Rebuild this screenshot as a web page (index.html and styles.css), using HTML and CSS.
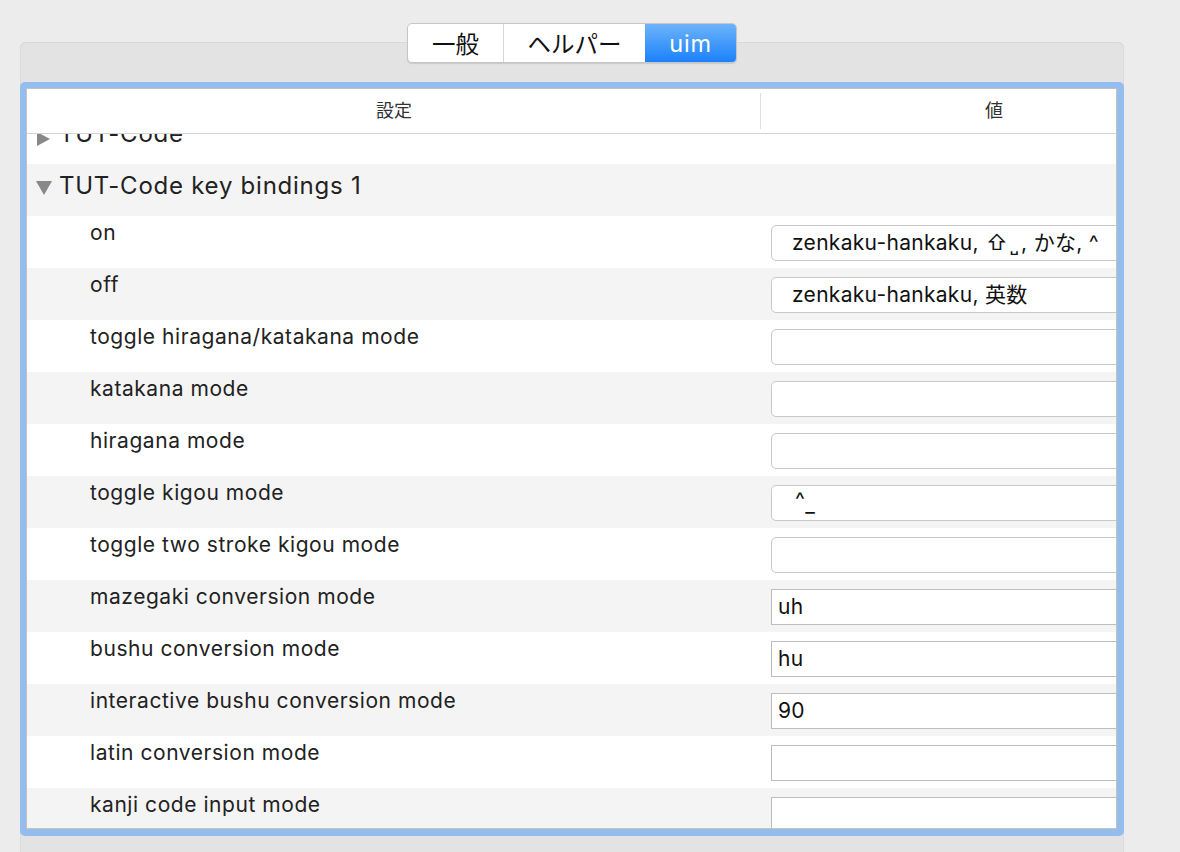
FILE: index.html
```html
<!DOCTYPE html>
<html lang="ja">
<head>
<meta charset="utf-8">
<link rel="stylesheet" href="styles.css">
</head>
<body>
<div class="page">
  <div class="tabs">
    <div class="seg seg-general">一般</div>
    <div class="seg seg-helper">ヘルパー</div>
    <div class="seg seg-uim active">uim</div>
  </div>
  <div class="group">
    <div class="frame">
      <div class="table">
        <div class="thead">
          <div class="th th-name">設定</div>
          <div class="th th-value">値</div>
        </div>
        <div class="tbody">
          <div class="rows">
            <div class="row cat"><span class="tri tri-right"></span><span class="cat-label">TUT-Code</span></div>
            <div class="row cat alt"><span class="tri tri-down"></span><span class="cat-label">TUT-Code key bindings 1</span></div>
            <div class="row"><div class="label">on</div><div class="val"><div class="field round">zenkaku-hankaku, <span class="shift">⇧˽</span>, かな, ^</div></div></div>
            <div class="row alt"><div class="label">off</div><div class="val"><div class="field round">zenkaku-hankaku, 英数</div></div></div>
            <div class="row"><div class="label">toggle hiragana/katakana mode</div><div class="val"><div class="field round"></div></div></div>
            <div class="row alt"><div class="label">katakana mode</div><div class="val"><div class="field round"></div></div></div>
            <div class="row"><div class="label">hiragana mode</div><div class="val"><div class="field round"></div></div></div>
            <div class="row alt"><div class="label">toggle kigou mode</div><div class="val"><div class="field round"><span class="caret">^</span><span class="under">_</span></div></div></div>
            <div class="row"><div class="label">toggle two stroke kigou mode</div><div class="val"><div class="field round"></div></div></div>
            <div class="row alt"><div class="label">mazegaki conversion mode</div><div class="val"><div class="field square">uh</div></div></div>
            <div class="row"><div class="label">bushu conversion mode</div><div class="val"><div class="field square">hu</div></div></div>
            <div class="row alt"><div class="label">interactive bushu conversion mode</div><div class="val"><div class="field square">90</div></div></div>
            <div class="row"><div class="label">latin conversion mode</div><div class="val"><div class="field square"></div></div></div>
            <div class="row alt"><div class="label">kanji code input mode</div><div class="val"><div class="field square"></div></div></div>
          </div>
        </div>
      </div>
    </div>
  </div>
</div>
</body>
</html>
```

FILE: styles.css
```css
* { box-sizing: border-box; }
html, body {
  margin: 0;
  height: 100%;
  overflow: hidden;
}
body {
  background: #ececec;
  font-family: Inter, "Noto Sans CJK JP", sans-serif;
  color: #222;
}
.page {
  padding-top: 23px;
  width: 1180px;
  height: 852px;
  overflow: hidden;
}
.tabs {
  position: relative;
  z-index: 2;
  display: flex;
  width: 330px;
  height: 40px;
  margin-left: 407px;
  background: #fff;
  border: 1px solid #c6c6c6;
  border-radius: 5px;
  box-shadow: 0 1px 1px rgba(0,0,0,0.12);
  overflow: hidden;
}
.seg {
  display: flex;
  align-items: center;
  justify-content: center;
  font-size: 23.5px;
  color: #111;
  height: 100%;
}
.seg-general { width: 96px; border-right: 1px solid #d6d6d6; }
.seg-helper { width: 141px; }
.seg-uim { flex: 1; letter-spacing: 0.8px; }
.seg.active {
  background: linear-gradient(#6db3fa, #1b82fb);
  color: #fff;
}
.group {
  margin-top: -21px;
  margin-left: 20px;
  width: 1104px;
  height: 900px;
  background: #e3e3e3;
  border-radius: 6px;
  box-shadow: inset 0 1px 0 #d8d8d8, inset 1px 0 0 #dadada, inset -1px 0 0 #dadada;
  padding-top: 40px;
}
.frame {
  width: 1104px;
  height: 754px;
  background: #92bdec;
  border-radius: 5px;
  padding: 6px 7px 7px 6px;
}
.table {
  width: 100%;
  height: 100%;
  background: #fff;
  border: 1px solid #c2c2c2;
  overflow: hidden;
  display: flex;
  flex-direction: column;
}
.thead {
  flex: none;
  display: flex;
  height: 45px;
  border-bottom: 1px solid #d4d4d4;
  width: 1200px;
}
.th {
  display: flex;
  align-items: center;
  justify-content: center;
  font-size: 18px;
  color: #333;
  padding-bottom: 4px;
}
.th-name {
  width: 734px;
  position: relative;
}
.th-name::after {
  content: "";
  position: absolute;
  right: 0;
  top: 4px;
  bottom: 4px;
  width: 1px;
  background: #dedede;
}
.th-value {
  width: 466px;
}
.tbody {
  flex: 1;
  overflow: hidden;
}
.rows {
  margin-top: -22px;
  width: 1200px;
}
.row {
  display: flex;
  height: 52px;
  background: #fff;
}
.row.alt { background: #f4f4f4; }
.row.cat {
  align-items: flex-start;
  padding-left: 9px;
}
.cat-label {
  font-size: 24px;
  line-height: 28px;
  padding-top: 8px;
  letter-spacing: 0.75px;
  color: #222;
}
.tri {
  width: 16px;
  margin-right: 7px;
  height: 28px;
  margin-top: 8px;
  position: relative;
}
.tri-down::before {
  content: "";
  position: absolute;
  left: 0;
  top: 9px;
  border-left: 8px solid transparent;
  border-right: 8px solid transparent;
  border-top: 14px solid #888;
}
.tri-right::before {
  content: "";
  position: absolute;
  left: 1px;
  top: 12px;
  border-top: 7px solid transparent;
  border-bottom: 7px solid transparent;
  border-left: 13px solid #888;
}
.label {
  width: 734px;
  padding-left: 63px;
  padding-top: 5px;
  font-size: 21px;
  line-height: 24px;
  letter-spacing: 0.55px;
  color: #222;
}
.val {
  flex: 1;
  padding-left: 10px;
  padding-top: 9px;
}
.field {
  width: 420px;
  height: 36px;
  background: #fff;
  font-size: 21px;
  line-height: 34px;
  letter-spacing: 0.3px;
  color: #111;
  white-space: nowrap;
}
.field.round {
  border: 1px solid #c8c8c8;
  border-radius: 5px;
  padding-left: 20px;
}
.field.square {
  border: 1px solid #bdbdbd;
  padding-left: 6px;
}
.shift {
  letter-spacing: 2px;
  margin-left: 1px;
}
.caret {
  display: inline-block;
  position: relative;
  top: -3px;
  margin-left: 3px;
}
.under {
  display: inline-block;
  position: relative;
  top: 2px;
}
```
